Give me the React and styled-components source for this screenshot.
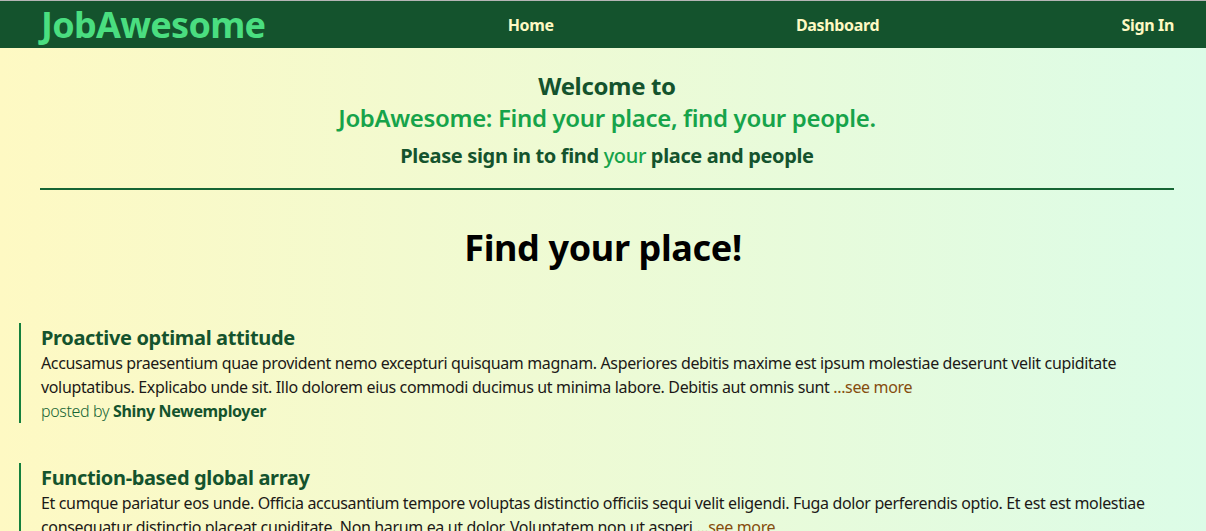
import styled, { createGlobalStyle } from "styled-components";

const GlobalStyle = createGlobalStyle`
  * { box-sizing: border-box; }
  body {
    margin: 0;
    font-family: "Noto Sans", "Open Sans", sans-serif;
    letter-spacing: -0.022em;
    background: linear-gradient(to right, #fef9c3, #dcfce7);
    min-height: 100vh;
    border-top: 1px solid #b5b5b5;
  }
`;

const Nav = styled.nav`
  height: 47px;
  background-color: #14532d;
  display: flex;
  align-items: center;
  justify-content: space-between;
  padding: 0 32px 0 41px;
`;

const Logo = styled.a`
  font-size: 36px;
  font-weight: 700;
  letter-spacing: -0.02em;
  color: #4ade80;
  text-decoration: none;
`;

const NavLink = styled.a`
  font-size: 16px;
  font-weight: 700;
  color: #fef9c3;
  text-decoration: none;
  cursor: pointer;
`;

const Header = styled.header`
  margin: 0 32px 0 40px;
  padding-top: 22px;
  padding-bottom: 18px;
  border-bottom: 2px solid #166534;
  text-align: center;
`;

const Welcome = styled.h2`
  margin: 0;
  font-size: 24px;
  line-height: 32px;
  font-weight: 700;
  color: #14532d;
`;

const Tagline = styled.div`
  font-size: 24px;
  line-height: 32px;
  font-weight: 600;
  color: #16a34a;
`;

const SignInNote = styled.h3`
  margin: 8px 0 0;
  font-size: 20px;
  line-height: 28px;
  font-weight: 700;
  color: #14532d;
`;

const Accent = styled.span`
  color: #16a34a;
  font-weight: ${(p) => (p.$light ? 500 : 700)};
`;

const Title = styled.h1`
  margin: 36px 0 0;
  font-size: 36px;
  line-height: 44px;
  font-weight: 700;
  letter-spacing: -0.01em;
  color: #000;
  text-align: center;
`;

const PostList = styled.div`
  display: flex;
  flex-direction: column;
  gap: 40px;
  margin: 53px 19px 0;
`;

const Post = styled.article`
  border-left: 2px solid #15803d;
  padding-left: 20px;
`;

const PostTitle = styled.h4`
  margin: 0;
  padding-top: 1px;
  font-size: 20px;
  line-height: 27px;
  font-weight: 700;
  color: #14532d;
`;

const Body = styled.p`
  margin: 0;
  font-size: 16px;
  line-height: 24px;
  color: #1c1917;
`;

const SeeMore = styled.a`
  color: #854d0e;
  cursor: pointer;
`;

const Byline = styled.div`
  font-size: 16px;
  line-height: 24px;
  font-weight: 300;
  color: #166534;

  b {
    font-weight: 700;
    color: #14532d;
  }
`;

const posts = [
  {
    title: "Proactive optimal attitude",
    body: "Accusamus praesentium quae provident nemo excepturi quisquam magnam. Asperiores debitis maxime est ipsum molestiae deserunt velit cupiditate voluptatibus. Explicabo unde sit. Illo dolorem eius commodi ducimus ut minima labore. Debitis aut omnis sunt",
    author: "Shiny Newemployer",
  },
  {
    title: "Function-based global array",
    body: "Et cumque pariatur eos unde. Officia accusantium tempore voluptas distinctio officiis sequi velit eligendi. Fuga dolor perferendis optio. Et est est molestiae consequatur distinctio placeat cupiditate. Non harum ea ut dolor. Voluptatem non ut asperi",
    author: "Shiny Newemployer",
  },
];

const App = () => {
  return (
    <>
      <GlobalStyle />
      <Nav>
        <Logo>JobAwesome</Logo>
        <NavLink>Home</NavLink>
        <NavLink>Dashboard</NavLink>
        <NavLink>Sign In</NavLink>
      </Nav>
      <Header>
        <Welcome>Welcome to</Welcome>
        <Tagline>JobAwesome: Find your place, find your people.</Tagline>
        <SignInNote>
          Please sign in to find <Accent $light>your</Accent> place and people
        </SignInNote>
      </Header>
      <Title>Find your place!</Title>
      <PostList>
        {posts.map((post) => (
          <Post key={post.title}>
            <PostTitle>{post.title}</PostTitle>
            <Body>
              {post.body} <SeeMore>...see more</SeeMore>
            </Body>
            <Byline>
              posted by <b>{post.author}</b>
            </Byline>
          </Post>
        ))}
      </PostList>
    </>
  );
};

export default App;
